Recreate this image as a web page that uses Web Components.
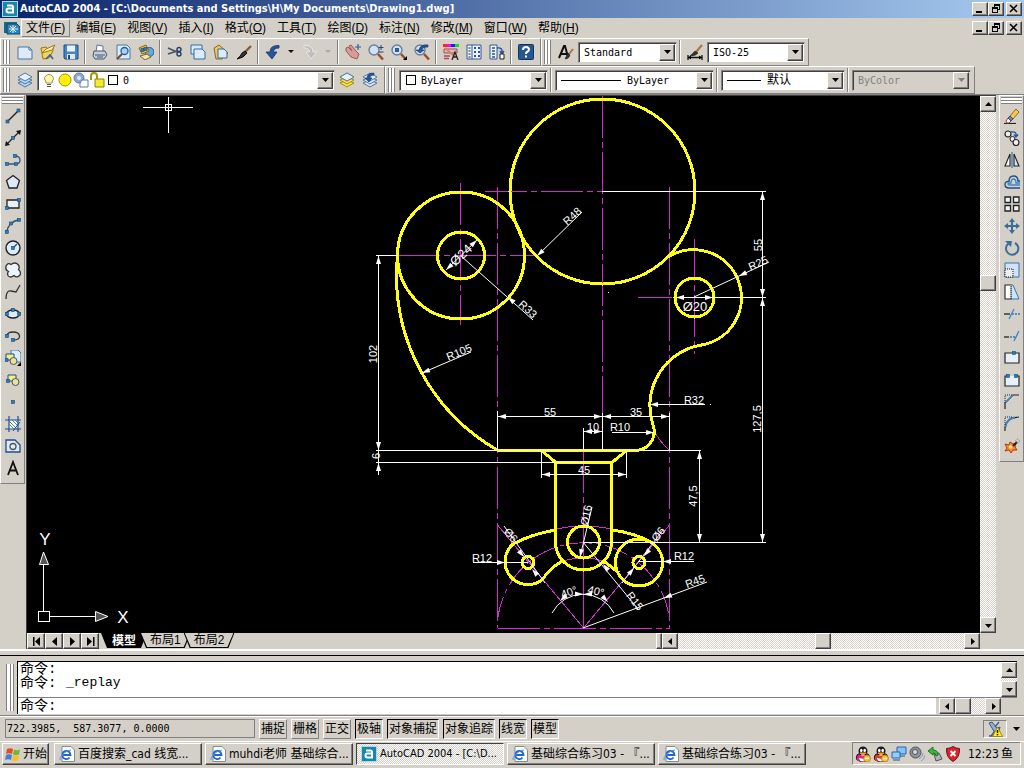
<!DOCTYPE html>
<html lang="zh-CN">
<head>
<meta charset="utf-8">
<title>AutoCAD 2004</title>
<style>
    body {
        margin: 0;
        background: #d4d0c8;
        color: #000;
        font: 12px/16px "DejaVu Sans Condensed", "Noto Sans CJK SC", sans-serif;
    }
</style>
</head>
<body>
<cad-app></cad-app>

<script>
const BASE = /* css */ `
    *, *::before, *::after { box-sizing: border-box; }
    button, select, input { font: inherit; color: inherit; margin: 0; padding: 0; border: 0; border-radius: 0; background: none; outline: none; }
    svg { display: block; }
    .raised { background: #d4d0c8; border: 1px solid; border-color: #fff #404040 #404040 #fff; box-shadow: inset -1px -1px #808080; }
    .sunken { border: 1px solid; border-color: #808080 #fff #fff #808080; }
    .track { background: repeating-conic-gradient(#fff 0 25%, #d4d0c8 0 50%) 0 0 / 2px 2px; }
`;

class CadElement extends HTMLElement {
    constructor() {
        super();
        this.attachShadow({ mode: 'open' });
    }
    connectedCallback() {
        this.shadowRoot.innerHTML = `<style>${BASE}${this.styles()}</style>${this.render()}`;
    }
    styles() { return ''; }
    render() { return '<slot></slot>'; }
}

/* ------------------------- icons ------------------------- */
const dot = (x, y) => `<rect x="${x - 1.5}" y="${y - 1.5}" width="3" height="3" fill="#2e7db8" stroke="#124a80" stroke-width=".6"/>`;
const ln = (d, c = '#222', w = 1.3) => `<path d="${d}" fill="none" stroke="${c}" stroke-width="${w}"/>`;
const sh = (d, f = '#dceafa', c = '#1d4f8c', w = 1) => `<path d="${d}" fill="${f}" stroke="${c}" stroke-width="${w}"/>`;
const lens = sh('M1 6a5 5 0 1 0 10 0a5 5 0 1 0-10 0', '#cfe2f5', '#6b7f96', 1.4) + ln('M10 10l5 5.500', '#9b4d22', 2.4);
const layers = (a = '#b9d3ee', b = '#4d7aa8') =>
    sh('M1 11l7-3l7 3l-7 4z', a, b) + sh('M1 8l7-3l7 3l-7 4z', a, b) + sh('M1 5l7-4l7 4l-7 4z', '#e7f0fa', b);
const penguin = (c) =>
    sh('M3 8c-2 2-2 4-1 6l4 1.500h4l4-1.500c1-2 1-4-1-6z', '#222', '#222') +
    '<circle cx="8" cy="5" r="4.500" fill="#181818"/><ellipse cx="6.300" cy="4.500" rx="1.300" ry="1.700" fill="#fff"/><ellipse cx="9.700" cy="4.500" rx="1.300" ry="1.700" fill="#fff"/><ellipse cx="8" cy="12" rx="4" ry="3.500" fill="#fff"/>' +
    sh('M5 7h6l-3 2z', '#f7a21b', '#f7a21b') + ln('M3 9.500c3 2 7 2 10 0', c, 3) + ln('M3 10v5', c, 2) +
    '<circle cx="12" cy="12.500" r="3.500" fill="#ffb629" stroke="#b66a00" stroke-width=".6"/>' + ln('M10 12.500h4', '#fff', 1.5);

const ICONS = {
    app: '<rect width="16" height="16" fill="#1b86ad"/><rect x=".5" y=".5" width="15" height="15" fill="none" stroke="#a7dcee"/>' + ln('M5 4.500h4.500q1.500 0 1.500 1.500v6.500M11 7.500h-4.500q-2 0-2 2t2 2h4.500', '#fff', 2),
    doc: '<rect y="2" width="13" height="11" fill="#1c668f"/>' + sh('M3 4h10l3 3v7h-13z', '#2f87b5', '#114666') + ln('M9 5v8M5 9h9M6 6l6 6M12 6l-6 6', '#dff4ff', 1),
    newfile: sh('M1 3h11l3 3v9h-14z', '#dceafa', '#4779ad') + ln('M12 3v3h3', '#4779ad', 1),
    open: sh('M1 4l5-1l2 2l5-2v4l-4 7l-6 1z', '#f2d35b', '#9a7619') + sh('M2 9l4-4l9-4l-3 5z', '#fff3a6', '#9a7619') + ln('M6 15l4-4l3 4', '#37628e', 1.6),
    save: sh('M1 1h14v14h-13l-1-1z', '#4b84c2', '#1d4a85') + '<rect x="4" y="1.500" width="8" height="6" fill="#e7f2ff"/><rect x="4" y="10" width="8" height="5" fill="#dfe6ee"/><rect x="5" y="11" width="2" height="4" fill="#1d4a85"/>',
    print: sh('M5 1l6 1v6h-7z', '#fff', '#57759a') + sh('M2 7h11l2 4l-3 4h-9l-2-3z', '#c5cfdf', '#44556c') + ln('M3 11h10M5 13h6', '#44556c', 1),
    preview: sh('M2 1h10l3 3v11h-13z', '#dceafa', '#4779ad') + sh('M6 7a3.500 3.500 0 1 0 7 0a3.500 3.500 0 1 0-7 0', '#a8d0f5', '#2f5d94', 1.3) + ln('M7 10l-5 5', '#7a4a2a', 2),
    publish: sh('M7 8a4.500 4.500 0 1 0 9 0a4.500 4.500 0 1 0-9 0', '#62a9dd', '#1d5a94') + sh('M1 4l7-3l3 6l-7 3z', '#f4c53a', '#8a6510') + sh('M2 12l7-2l4 3l-6 3z', '#f0e3b0', '#806020') + dot(4.5, 6) + dot(7.5, 5),
    cut: ln('M1 4l9 4M1 10l9-3', '#4a5564', 1.6) + ln('M10 10a2 2 0 1 0 4 0a2 2 0 1 0-4 0M10 5.500a2 2 0 1 0 4 0a2 2 0 1 0-4 0', '#243f6b', 1.4),
    copy: sh('M1 1h11v9h-11z', '#dceafa', '#2f6da5') + sh('M4 5h8l3 3v7h-11z', '#dceafa', '#2f6da5'),
    paste: sh('M1 4l5-3l9 8l-6 6h-6z', '#e9c46a', '#8a6a20') + sh('M5 5h6l3 3v6h-9z', '#dceafa', '#2f6da5'),
    brush: ln('M15 2l-6 6', '#8a5a35', 2.4) + sh('M9 7l2 2q-3 5-10 6q4-3 5-6z', '#333', '#111'),
    undo: sh('M14 1.500Q5 1 5 8H1l6 7l5-7H8.500Q8.500 4 14 4z', '#26559d', '#153469', .8),
    redo: sh('M2 1.500Q11 1 11 8h4l-6 7l-5-7h3.500Q7.500 4 2 4z', '#c0bfbd', '#eeeeec', .8),
    tri: '<path d="M5 6h6l-3 3z" fill="#111"/>',
    trioff: '<path d="M5 6h6l-3 3z" fill="#aaa"/>',
    pan: sh('M1 4l2-1l4 4l-3-5l2-1l5 6l3 3l-2 5l-6-2l-5-6z', '#d99a98', '#9a5a5a') + ln('M13 0v6M10 3h6', '#2f5d94', 1.2),
    zoomrt: lens + ln('M13 1v5M10.500 3.500h5M10.500 8h5', '#26466e', 1),
    zoomwin: lens + '<rect x="4" y="4" width="4" height="4" fill="#2f5d94"/><path d="M16 16h-4l4-4z"/>',
    zoomprev: lens + sh('M14 1q-8-1-9 5h-3l4 3l4-3h-2q0-3 6-3z', '#26559d', '#153469', .6),
    props: '<rect x="0" y="0" width="4" height="3" fill="#f22"/><rect x="4" y="0" width="4" height="3" fill="#f0f"/><rect x="8" y="0" width="4" height="3" fill="#12f"/><rect x="12" y="0" width="4" height="3" fill="#1d2"/>' + sh('M1 5h13v4h-13z', '#e9b9b0', '#a04858') + ln('M1 12h6M1 14.500h5', '#b8435b', 1.4) + ln('M2 4l9 8', '#c98a60', 2) + ln('M9 16l3-8l3 8M10 13h4', '#222', 1.3),
    dcenter: sh('M1 1h14v14h-14z', '#e9f2fd', '#2f5d94') + ln('M6 1v14', '#2f5d94', 1) + ln('M2.500 4h2M2.500 7h2M2.500 10h2M2.500 13h2', '#222', 1) + '<path d="M8 3h2v2h-2zm4 0h2v2h-2zM8 7h2v2h-2zm4 0h2v2h-2zM8 11h2v2h-2zm4 0h2v2h-2z" fill="#35537d"/>',
    palette: sh('M1 1h7v14h-7z', '#e9f2fd', '#2f5d94') + ln('M3 4h3M3 7h3M3 10h3M3 13h3', '#35537d', 1.5) + ln('M8 4q6-1 5 5M11 7l2 3l2-3', '#26559d', 1.4) + sh('M11 10h4v5h-4z', '#fff', '#222'),
    help: '<rect x=".5" y=".5" width="15" height="15" rx="1" fill="#24568f" stroke="#12345e"/>' + ln('M5 6q0-3 3-3t3 2.500q0 1.500-2 2.500q-1 .5-1 2', '#fff', 2) + '<rect x="7" y="11.500" width="2" height="2" fill="#fff"/>',
    tstyle: ln('M1 14l5-12h1l3 11M3 10h6', '#111', 2) + ln('M15 5l-4 5', '#a87445', 2) + sh('M10 9l2 2q-1 4-5 4z', '#333', '#111', .5),
    dimstyle: ln('M1 11v5M15 11v5M1 13.500h14', '#111', 1.3) + '<path d="M1 13.500l3-2v4zM15 13.500l-3-2v4z"/>' + ln('M15 1l-6 7', '#a87445', 2) + sh('M8 7l3 2q-2 3-8 3z', '#333', '#111', .5),
    layers: layers(),
    layermake: layers('#ffe04a', '#a58a1a') + sh('M1 5l7-4l7 4l-7 4z', '#e7f0fa', '#4d7aa8'),
    layerprev: layers('#dbe6f2') + sh('M12 1q-7 0-7 5h-2l4 4l3-4h-2q0-3 4-3z', '#26559d', '#153469', .6),
    bulb: sh('M5 11q0-2-1.500-4a4.500 4.500 0 1 1 9 0q-1.500 2-1.500 4z', '#fff7a8', '#9a9450') + ln('M6 12.500h4M6 14.500h4', '#555', 1.2),
    sun: '<circle cx="8" cy="8" r="6" fill="#fff000" stroke="#a29400"/>',
    vpfreeze: '<circle cx="6" cy="6" r="5" fill="#93abc6" stroke="#5c7da5"/><circle cx="6" cy="6" r="2" fill="#dceafa"/>' + sh('M9 8h6v7h-8v-4z', '#fff', '#5c7da5'),
    lock: ln('M2 8v-4q0-3 3-3t3 3v3', '#a49a12', 2) + sh('M6 7h9v8h-9z', '#f2ec2a', '#8c8408'),
    swatch: '<rect x="3.500" y="3.500" width="9" height="9" fill="#fff" stroke="#000"/>',
    line: ln('M2 14L14 2', '#222', 1.5) + dot(2.500, 13.500) + dot(13.500, 2.500),
    xline: ln('M2 14L14 2') + '<path d="M0 16l1-5l4 4zM16 0l-1 5l-4-4z" fill="#111"/>' + dot(8, 8),
    pline: ln('M2 12h9q4 0 4-4t-5-4', '#33567a') + dot(2, 12) + dot(11, 12) + dot(10, 4),
    polygon: sh('M8 1.500l6.500 5l-2.500 7.500h-8l-2.500-7.500z', '#dceafa', '#222', 1.3),
    rect: sh('M2 4h12v8h-12z', '#e7f0fb', '#222', 1.3) + dot(2, 12) + dot(14, 4),
    arc: ln('M1.500 14.500Q3 4 14.500 1.500', '#3a5068', 1.5) + dot(1.800, 14) + dot(6, 5.500) + dot(14, 1.800),
    circle: sh('M1 8a7 7 0 1 0 14 0a7 7 0 1 0-14 0', '#dceafa', '#222', 1.4) + ln('M8 8l4-4', '#1d4f8c', 1.3) + dot(8, 8),
    cloud: sh('M6 2.500Q10-.5 13 2.500Q15 5 13.500 7.500Q16.500 10 15 13Q12 16.500 9 13.500Q5 16.500 3 13.500Q2 11 3.500 9.500Q0 8 1 4Q3 0 6 2.500z', '#eef4fc', '#333', 1.3),
    spline: ln('M1 15q0-9 5-8t5 1t4-7', '#333', 1.3),
    ellipse: '<ellipse cx="8" cy="8" rx="6.500" ry="4" fill="#dceafa" stroke="#222" stroke-width="1.300"/>' + dot(1.800, 8) + dot(14.200, 8) + dot(8, 4),
    earc: ln('M2 8q0-4 6-4t6.500 4t-6.500 4', '#333', 1.3) + dot(2, 8) + dot(8, 12),
    insert: sh('M6 0h7l3 3v9h-10z', '#dceafa', '#3a74a8') + sh('M1 4h8v6h-8z', '#f2ee8c', '#1d4f8c') + sh('M5 11a3.500 3.500 0 1 0 7 0a3.500 3.500 0 1 0-7 0', '#e6e29a', '#555') + dot(1.500, 10) + '<path d="M16 16h-4l4-4z"/>',
    block: sh('M3 3h8v6h-8z', '#f2ee8c', '#1d4f8c') + sh('M7 10a3.500 3.500 0 1 0 7 0a3.500 3.500 0 1 0-7 0', '#e6e29a', '#555') + dot(3, 9),
    point: dot(8, 8),
    hatch: '<rect x="4" y="4" width="9" height="9" fill="#fff"/>' + ln('M4 0v16M13 0v16M0 4h16M0 13h16', '#1d4f8c', 1.2) + ln('M4 5l8 8M4 8l5 5M7 4l6 6M10 4l3 3', '#3a74a8', .9) + ln('M15 6l-7 9', '#1d4f8c', 1),
    region: sh('M1 2h9l5 5v7h-14z', '#dceafa', '#1d4f8c', 1.3) + ln('M5 8.500a3 3 0 1 0 6 0a3 3 0 1 0-6 0', '#555', 1.3),
    mtext: ln('M3 15L8 2l5 13M5 10.500h6', '#111', 1.8),
    erase: ln('M0 15.500h12', '#222', 1.2) + sh('M6 8l6-7l3 3l-6 7z', '#f6c94a', '#8a6a20') + sh('M4 10l2-2l3 3l-2 2z', '#5f86b8', '#2f5080') + sh('M4 10l3 3l-2 2h-2l-1-2z', '#fff', '#8a4040'),
    copyobj: sh('M1 4a3 3 0 1 0 6 0a3 3 0 1 0-6 0', '#eee', '#222', 1.2) + sh('M6 9a2.500 2.500 0 1 0 5 0a2.500 2.500 0 1 0-5 0', '#eee', '#222', 1) + sh('M9 12.500a3 3 0 1 0 6 0a3 3 0 1 0-6 0', '#eee', '#222', 1.2) + ln('M7 2q6-1 5 4M10 4.500l2 2.500l2-2.500', '#26559d', 1.4),
    mirror: sh('M6 2v12h-5z', '#fff', '#222', 1.1) + sh('M10 2v12h5z', '#cfe2f8', '#222', 1.1) + ln('M8 0v16', '#3a74a8', 1.2),
    offset: ln('M16 14h-11q-4 0-4-3.500t4-3q0-5.500 4.500-5.500t4.500 5h2', '#1d4f8c', 1.4) + ln('M16 11h-10q-2 0-2-1t3-1q0-4 2.500-4t2.500 4h4', '#3a84c8', 1.3),
    array: ['1 1', '9.500 1', '1 9.500', '9.500 9.500'].map(p => sh(`M${p}h5.500v5.500h-5.500z`, '#eef4fc', '#222', 1.3)).join(''),
    move: ln('M8 2v12M2 8h12', '#3d6c9c', 2) + '<path d="M8 0l3 4h-6zM8 16l3-4h-6zM0 8l4-3v6zM16 8l-4-3v6z" fill="#3d6c9c"/>',
    rotate: ln('M4.500 3.500A6.200 6.200 0 1 0 11 3', '#3d6c9c', 2) + '<path d="M1 1h7l-1 6z" fill="#3d6c9c"/>',
    scale: sh('M1 1h14v14h-14z', '#cfe2f8', '#3a74a8') + '<path d="M1 7h8v8h-8z" fill="#eee" stroke="#111" stroke-dasharray="1 1"/>',
    stretch: sh('M7 1h2l6 14h-8z', '#cfe2f8', '#3a74a8') + sh('M1 1h6v14h-6z', '#fff', '#222', 1.1) + '<path d="M7 1v14" stroke="#fff" stroke-dasharray="1 1"/>',
    trim: ln('M0 8h6', '#222', 1.3) + '<path d="M8 8h8" stroke="#3a74a8" stroke-width="1.300" stroke-dasharray="2 1"/>' + ln('M10 3l-5 10', '#3a84c8', 1.3),
    extend: ln('M0 9h5', '#222', 1.3) + '<path d="M6 9h5" stroke="#3a74a8" stroke-width="1.300" stroke-dasharray="2 1"/>' + ln('M15 3l-5 10', '#3a84c8', 1.3),
    breakpt: sh('M1 3h14v10h-14z', '#e7f0fb', '#222', 1.2) + dot(10, 3),
    breakit: sh('M4 4h-3v10h14v-10h-3', '#e7f0fb', '#222', 1.2) + dot(4, 4) + dot(12, 4),
    chamfer: ln('M1 15V9L9 1h6', '#222', 1.2) + ln('M1 9L9 1', '#3a84c8', 1.4) + '<path d="M1 9V1h8" fill="none" stroke="#222" stroke-dasharray="1 1"/>',
    fillet: ln('M1 15q-1-13 14-14', '#222', 1.2) + ln('M1.500 11Q3 2 11 1.500', '#3a84c8', 2) + '<path d="M1 9V1h8" fill="none" stroke="#222" stroke-dasharray="1 1"/>',
    explode: sh('M1 6l4 1l1-3l3 2l3-1l-1 4l2 3l-4 0l-2 3l-2-3l-4 1l2-3z', '#f4912a', '#b8331a') + '<circle cx="6.500" cy="9" r="1.800" fill="#ffe58a"/>' + ln('M9 8l4-4', '#222', 2) + '<circle cx="13.500" cy="3" r="2" fill="none" stroke="#888" stroke-dasharray="1 1"/>',
    ie: sh('M3 .5h9l3.500 3.500v11.500h-12.500z', '#fff', '#7f8b9b') + ln('M10.500 11.500q-1.500 2-4 1.500q-3.500-1-3-4.500t4-3.500t4 4h-7', '#1f66c8', 1.8) + ln('M1 14q-1-2 3-6t8-4', '#4b9be8', 1),
    win: '<path d="M2 3q3-1.500 6 0l-1 5q-3-1.500-6 0z" fill="#e8491d"/><path d="M9 3.500q3 1.500 6 0l-1 5q-3 1.500-6 0z" fill="#74b62e"/><path d="M1 9q3-1.500 6 0l-1 5q-3-1.500-6 0z" fill="#3b7fe0"/><path d="M8 9.500q3 1.500 6 0l-1 5q-3 1.500-6 0z" fill="#f7c01f"/>',
    qq1: penguin('#e3208c'),
    qq2: penguin('#e03a1c'),
    net: sh('M6 1h9v7h-9z', '#7fc4ff', '#2f62a8') + ln('M8 10h6', '#5f7da8', 1.5) + sh('M1 6h8v6h-8z', '#8fd0ff', '#2f62a8') + ln('M2 14h7', '#5f7da8', 1.5),
    volume: '<circle cx="6.500" cy="6.500" r="5.500" fill="#8d939b" stroke="#4e535a"/><circle cx="6" cy="6" r="2.500" fill="#d8dde3" stroke="#555"/>' + ln('M10 13q4-2 4-6M12 15q4-2 4-6', '#7f9ad0', 1),
    usb: sh('M7 8l5-1l3 6l-6 2z', '#aeb4bc', '#555') + sh('M1 5l5-4v3q5 0 5 5l-2 1q0-3-3-3v2z', '#3fb53f', '#1c741c'),
    shield: sh('M8 .5q3 2 6.500 2q.5 9-6.500 13q-7-4-6.500-13q3.500 0 6.500-2z', '#d9232e', '#7b0d14') + ln('M5.500 5l5 5M10.500 5l-5 5', '#fff', 2),
    satellite: sh('M2 2l3-1l5 6l3-1l-1 4l-4 2z', '#93aed0', '#3b5a86') + ln('M8 6l4-5M4 15l4-5M2 15h8', '#3b5a86', 1.3) + sh('M10.500 6l5 9.500h-10z', '#ffe92e', '#a18a00') + ln('M10.500 9v3M10.500 13v1.300', '#000', 1.4),
};

class CadIcon extends CadElement {
    styles() {
        return `:host { display: block; flex: none; width: 16px; height: 16px; }`;
    }
    render() {
        return `<svg width="16" height="16" viewBox="0 0 16 16" aria-hidden="true">${ICONS[this.getAttribute('name')] || ''}</svg>`;
    }
}

/* ------------------------- toolbars ------------------------- */
class CadToolbar extends CadElement {
    styles() {
        return /* css */ `
            :host { display: flex; align-items: center; height: 28px; padding: 0 3px 0 2px; border: 1px solid; border-color: #fff #808080 #808080 #fff; }
            :host([vertical]) { flex-direction: column; width: 25px; height: auto; padding: 1px 0 4px; }
            .grip { flex: none; align-self: stretch; width: 7px; margin: 1px 3px 1px 0; border: solid #808080; border-width: 0 1px; background: linear-gradient(90deg, #fff 2px, #808080 2px 3px, #fff 3px 5px, #d4d0c8 5px); }
            :host([vertical]) .grip { width: auto; height: 7px; margin: 0 1px 1px; border-width: 1px 0; background: linear-gradient(#fff 2px, #808080 2px 3px, #fff 3px 5px, #d4d0c8 5px); }
        `;
    }
    render() { return '<div class="grip"></div><slot></slot>'; }
}

class CadTool extends CadElement {
    styles() {
        return /* css */ `
            :host { display: block; flex: none; width: 23px; height: 22px; }
            :host([narrow]) { width: 14px; }
            :host([inrail]) { width: 22px; }
            button { display: flex; align-items: center; justify-content: center; width: 100%; height: 100%; }
        `;
    }
    render() {
        const icon = this.getAttribute('icon');
        return `<button type="button" aria-label="${icon}"><cad-icon name="${icon}"></cad-icon></button>`;
    }
}

class CadSep extends CadElement {
    styles() {
        return `:host { flex: none; width: 2px; height: 24px; margin: 0 2px; border-left: 1px solid #808080; border-right: 1px solid #fff; }`;
    }
    render() { return ''; }
}

class CadCombo extends CadElement {
    styles() {
        return /* css */ `
            :host { display: block; flex: none; width: var(--w); min-width: 0; margin: 0 0 0 1px; }
            .box { display: grid; grid-template-columns: auto 1fr; align-items: center; height: 21px; padding: 1px; background: #fff; border: 1px solid; border-color: #808080 #d4d0c8 #d4d0c8 #808080; box-shadow: inset 1px 1px #404040; }
            .icons { display: flex; align-items: center; padding-left: 2px; }
            select { grid-area: 1 / 2; appearance: none; width: 100%; height: 17px; padding: 0 18px 0 2px; font: var(--fs, 10px)/17px "DejaVu Sans Mono", "Noto Sans CJK SC", monospace; }
            .arrow { grid-area: 1 / 2; justify-self: end; display: grid; place-items: center; width: 16px; height: 17px; pointer-events: none; }
            :host([disabled]) .box { background: #d4d0c8; }
            :host([disabled]) select { color: #808080; opacity: 1; }
            :host([disabled]) path { fill: #808080; }
        `;
    }
    render() {
        const off = this.hasAttribute('disabled') ? 'disabled' : '';
        return /* html */ `
            <div class="box">
                <span class="icons"><slot></slot></span>
                <select aria-label="${this.getAttribute('label')}" ${off}><option>${this.getAttribute('value')}</option></select>
                <span class="arrow raised"><svg width="7" height="4"><path d="M0 0h7l-3.500 4z"/></svg></span>
            </div>`;
    }
}

/* ------------------------- window parts ------------------------- */
class WinButtons extends CadElement {
    styles() {
        return /* css */ `
            :host { display: flex; margin-left: auto; padding-right: 2px; }
            button { display: grid; place-items: center; width: 16px; height: 14px; }
            button:last-child { margin-left: 2px; }
        `;
    }
    render() {
        const glyphs = {
            '最小化': '<path d="M1 7h6v2h-6z"/>',
            '还原': '<path d="M3 0h6v6h-2v-1h1v-3h-4v1h-1zM1 3h6v6h-6zM2 5v3h4v-3z" fill-rule="evenodd"/>',
            '关闭': '<path d="M1 1l7 7M8 1l-7 7" stroke="#000" stroke-width="1.600"/>',
        };
        return Object.entries(glyphs).map(([k, g]) =>
            `<button type="button" class="raised" aria-label="${k}"><svg width="10" height="10">${g}</svg></button>`).join('');
    }
}

class CadTitle extends CadElement {
    styles() {
        return /* css */ `
            :host { display: flex; align-items: center; gap: 2px; height: 18px; padding-left: 2px; background: linear-gradient(90deg, #0a246a, #a6caf0); color: #fff; }
            h1 { margin: 0; font: bold 11px/18px "DejaVu Sans Condensed", sans-serif; white-space: nowrap; }
        `;
    }
    render() { return '<cad-icon name="app"></cad-icon><h1><slot></slot></h1><win-buttons></win-buttons>'; }
}

class CadMenu extends CadElement {
    styles() {
        return /* css */ `
            :host { display: flex; align-items: center; height: 20px; padding-left: 4px; }
            nav { display: flex; gap: 1px; padding-left: 1px; }
            button { height: 18px; padding: 0 4px; border: 1px solid transparent; font: 12px/16px "Liberation Sans", "Noto Sans CJK SC", sans-serif; white-space: nowrap; }
            button:first-child { border-color: #fff #808080 #808080 #fff; }
            u { text-underline-offset: 1px; }
        `;
    }
    render() {
        const items = ['文件F', '编辑E', '视图V', '插入I', '格式O', '工具T', '绘图D', '标注N', '修改M', '窗口W', '帮助H'];
        return `<cad-icon name="doc"></cad-icon><nav>${items.map(t =>
            `<button type="button">${t.slice(0, 2)}(<u>${t[2]}</u>)</button>`).join('')}</nav><win-buttons></win-buttons>`;
    }
}

class CadScroll extends CadElement {
    styles() {
        return /* css */ `
            :host { display: flex; min-width: 0; min-height: 0; }
            :host([vertical]) { flex-direction: column; }
            button { flex: none; display: grid; place-items: center; width: 16px; height: 16px; }
            .before { flex: var(--before, 0) 0 0; }
            .after { flex: var(--after, 1) 0 0; }
        `;
    }
    render() {
        const v = this.hasAttribute('vertical');
        const tri = (d) => `<svg width="7" height="7"><path d="${d}"/></svg>`;
        const thumb = this.hasAttribute('nothumb') ? '' : '<button type="button" class="raised" aria-label="滑块"></button>';
        return `<button type="button" class="raised" aria-label="向前">${tri(v ? 'M0 5h7l-3.500-4z' : 'M5 0v7l-4-3.500z')}</button>
            <span class="before track"></span>${thumb}<span class="after track"></span>
            <button type="button" class="raised" aria-label="向后">${tri(v ? 'M0 2h7l-3.500 4z' : 'M2 0v7l4-3.500z')}</button>`;
    }
}

/* ------------------------- drawing ------------------------- */
class CadDrawing extends CadElement {
    styles() {
        return /* css */ `
            :host { display: block; min-width: 0; min-height: 0; background: #000; overflow: hidden; }
            svg { width: 100%; height: 100%; }
            .part { fill: none; stroke: #ffff14; stroke-width: 3; shape-rendering: crispEdges; }
            .axis { fill: none; stroke: #d02cd0; stroke-dasharray: 42 4 6 4; shape-rendering: crispEdges; }
            .solid { stroke-dasharray: none; }
            .dim { fill: none; stroke: #fff; }
            .head { stroke: none; fill: #fff; }
            .ortho { shape-rendering: crispEdges; }
            text { fill: #fff; font: 11px "Liberation Sans", sans-serif; text-anchor: middle; dominant-baseline: central; }
            .big { font-size: 13px; }
            .ucs { font-size: 17px; }
        `;
    }
    // [texto, x, y, giro, clase]
    labels() {
        return [
            ['102', 373, 354, -90], ['6', 376, 456, -90], ['55', 550, 412, 0], ['35', 636, 412, 0],
            ['10', 593, 427, 0], ['R10', 620, 427, 0], ['R32', 694, 400, 0], ['45', 584, 470, 0],
            ['47,5', 693, 496, -90], ['127,5', 757, 419, -90], ['55', 758, 245, -90],
            ['R48', 572, 216, -43], ['Ø24', 461, 255, -43, 'big'], ['R33', 528, 309, 42],
            ['R105', 459, 352, -22], ['R25', 758, 263, -24], ['Ø20', 695, 306, 0, 'big'],
            ['Ø16', 586, 515, -78], ['Ø6', 511, 535, 50], ['Ø6', 658, 534, -52],
            ['R12', 482, 558, 0], ['R12', 684, 556, 0], ['R45', 695, 581, -20], ['R15', 635, 601, 52],
            ['40°', 569, 592, -20], ['40°', 596, 591, 14],
            ['X', 123, 617, 0, 'ucs'], ['Y', 45, 539, 0, 'ucs'],
        ];
    }
    // tip x, tip y, direction in degrees
    heads() {
        return [
            [378.5, 256, -90], [378.5, 450, 90], [378.5, 463, -90], [498, 416.5, 180], [602, 416.5, 0],
            [603, 416.5, 180], [669, 416.5, 0], [584, 431.5, 180], [602, 431.5, 0], [654, 432.5, 0],
            [650, 404.5, 180], [542, 474.5, 180], [626, 474.5, 0], [699.5, 451, -90], [699.5, 542, 90],
            [762.5, 192, -90], [762.5, 297, 90], [762.5, 298, -90], [762.5, 542, 90],
            [537, 256, 137], [446, 270, 137], [477, 240, -43], [508, 297, -138], [422, 373, 158],
            [739, 276, 155], [676, 297.5, 180], [713, 297.5, 0], [580, 557, 102], [524, 557, 50],
            [532, 569, -130], [644, 556, 130], [634, 568, -50], [505, 562.5, 0], [663, 561.5, 180],
            [664, 598, 159], [603, 564, -130], [560, 601, 138], [583, 594, 0], [584, 594, 180], [608, 602, 46],
        ];
    }
    render() {
        return /* html */ `
        <svg viewBox="27 96 953 537" preserveAspectRatio="xMidYMid meet" role="img" aria-label="Drawing1.dwg">
            <g class="axis">
                <path d="M602.5 96V416M485 191.5H602M497.500 187V628M669.500 187V628M460.500 183V325M398 255.500H537"/>
                <path d="M694.500 239V354M638 297.500H672M583.500 451V524M498 628.500H670"/>
                <path class="solid" d="M583.500 524V628M654 430Q659 441 669 450M497.500 525L583.500 628L669.500 525"/>
                <path d="M497.500 620A86.500 86.500 0 0 1 669.500 620" stroke-dasharray="24 4 5 4"/>
                <path class="solid" d="M556 529Q583 523 612 529M563 561Q583 555 604 561"/>
            </g>
            <g class="part">
                <circle cx="602.500" cy="191.500" r="92.500"/>
                <circle cx="461" cy="255.500" r="63.500"/>
                <circle cx="461" cy="255.500" r="23.500"/>
                <circle cx="694.500" cy="297.500" r="19.500"/>
                <path d="M397 262A202 202 0 0 0 498 450.500H636A19 19 0 0 0 653 425A61.500 61.500 0 0 1 701.500 345A48 48 0 1 0 668 257"/>
                <path d="M542 451L556 462.500H612L626 451M555.500 462V542A28 28 0 0 0 611.500 542V462"/>
                <circle cx="583.500" cy="542" r="16"/>
                <path d="M555.500 530Q532 534 513 544Q505 551 505 563A23 23 0 0 0 543 579Q548 570 562 561"/>
                <path d="M612 530Q635 533 653 543M605 562L619 573"/>
                <circle cx="639" cy="562.500" r="23.500"/>
                <circle cx="528" cy="562.500" r="6"/>
                <circle cx="639" cy="562.500" r="6"/>
            </g>
            <path d="M498 450.500H640M556 462.500H584" stroke="#fbf79a"/>
            <g class="dim ortho">
                <path d="M376 255.500H398M378.500 256V475M376 450.500H498M376 462.500H556"/>
                <path d="M602 191.500H766M762.500 191V542M714 297.500H766M676 297.500H714M584 542.500H766"/>
                <path d="M640 450.500H701M699.500 450V542M498 416.500H669M497.500 411V450M602.500 413V450M669.500 413V450"/>
                <path d="M583.500 428V450M584 431.500H602M612 432.500H654M649 404.500H705M710 404.500h1"/>
                <path d="M541.500 451V478M626.500 451V478M542 474.500H626M473 562.500H528M639 561.500H694M608 292.500h1"/>
            </g>
            <g class="dim">
                <path d="M537 256L582 212M446 270L477 240M461 256L533 320M422 373L471 352M694 297L769 262"/>
                <path d="M580 557L592 507M504 526L545 583M622 583L663 530M583 628L707 582M583 542L638 609"/>
                <path d="M552 613A35 35 0 0 1 614 613"/>
            </g>
            ${this.heads().map(([x, y, a]) => `<path class="head" d="M0 0L-8 2.500V-2.500z" transform="translate(${x} ${y}) rotate(${a})"/>`).join('')}
            ${this.labels().map(([t, x, y, a, c]) => `<text class="${c || ''}" transform="translate(${x} ${y}) rotate(${a})">${t}</text>`).join('')}
            <g class="dim ortho">
                <path d="M143 107.500H193M168.500 97V133M165.500 104.500h6v6h-6z"/>
                <path d="M38.500 611.500h11v10h-11zM43.500 611V564M50 616.500H95"/>
            </g>
            <g class="dim">
                <path d="M39.500 564.500L43.500 552L48.500 564.500zM95.500 611.500L108 616.500L95.500 621.500z" fill="#555"/>
            </g>
        </svg>`;
    }
}

class CadTabs extends CadElement {
    styles() {
        return /* css */ `
            :host { display: flex; height: 16px; }
            .nav { flex: none; display: grid; place-items: center; width: 18px; height: 16px; }
            .tabs { display: flex; padding-left: 2px; }
            .tab { display: block; height: 15px; margin-right: -7px; font: 12px/14px "Liberation Sans", "Noto Sans CJK SC", sans-serif; background: #000; clip-path: polygon(0 0, 100% 0, calc(100% - 6px) 100%, 6px 100%); }
            .tab.on { padding: 0 11px; color: #fff; font-weight: bold; }
            .tab.off { padding: 0 1px 1px; }
            .tab.off span { display: block; padding: 0 9px; background: #d4d0c8; clip-path: polygon(0 0, 100% 0, calc(100% - 6px) 100%, 6px 100%); }
            .split { flex: none; width: 6px; margin-left: auto; }
            cad-scroll { flex: 0 1 318px; --before: 137; --after: 133; }
        `;
    }
    render() {
        const nav = {
            '第一个': 'M1 0h1.500v9h-1.500zM8 0v9l-5-4.500z', '上一个': 'M7 0v9l-5-4.500z',
            '下一个': 'M2 0v9l5-4.500z', '最后一个': 'M1 0v9l5-4.500zM7 0h1.500v9h-1.500z',
        };
        return `${Object.entries(nav).map(([k, d]) => `<button type="button" class="nav raised" aria-label="${k}"><svg width="9" height="9"><path d="${d}"/></svg></button>`).join('')}
            <div class="tabs">
                <button type="button" class="tab on">模型</button>
                <button type="button" class="tab off"><span>布局1</span></button>
                <button type="button" class="tab off"><span>布局2</span></button>
            </div>
            <span class="split raised"></span><cad-scroll></cad-scroll>`;
    }
}

class CadWorkspace extends CadElement {
    styles() {
        return /* css */ `
            :host { display: flex; align-items: flex-start; flex: 1; min-height: 0; border-top: 1px solid #808080; }
            .view { align-self: stretch; flex: 1; display: grid; grid-template: 1fr 16px / 1fr 16px; min-width: 0; margin: 0 3px 0 1px; border-left: 1px solid #404040; border-top: 1px solid #404040; }
            cad-scroll { --before: 163; --after: 326; }
        `;
    }
    render() {
        const left = 'line xline pline polygon rect arc circle cloud spline ellipse earc insert block point hatch region mtext'.split(' ');
        const right = 'erase copyobj mirror offset array move rotate scale stretch trim extend breakpt breakit chamfer fillet explode'.split(' ');
        const tools = (list) => list.map(i => `<cad-tool inrail icon="${i}"></cad-tool>`).join('');
        return /* html */ `
            <cad-toolbar vertical>${tools(left)}</cad-toolbar>
            <div class="view">
                <cad-drawing></cad-drawing>
                <cad-scroll vertical></cad-scroll>
                <cad-tabs></cad-tabs>
            </div>
            <cad-toolbar vertical>${tools(right)}</cad-toolbar>`;
    }
}

/* ------------------------- bottom ------------------------- */
class CadCommand extends CadElement {
    styles() {
        return /* css */ `
            :host { display: flex; gap: 3px; padding: 10px 7px 1px 6px; border-top: 2px solid #fff; background: linear-gradient(#d4d0c8 4px, #000 4px 5px, #d4d0c8 5px); font: 13px/14px "Liberation Mono", "Noto Sans CJK SC", monospace; }
            .grip { flex: none; width: 8px; margin: 3px 0; border: solid #808080; border-width: 0 1px; background: linear-gradient(90deg, #fff 3px, #808080 3px 4px, #fff 4px 6px, #d4d0c8 6px); }
            .pane { flex: 1; min-width: 0; border-left: 1px solid #000; border-top: 1px solid #000; }
            .log { display: flex; height: 35px; background: #fff; }
            .text { flex: 1; padding-left: 2px; }
            p { display: flex; margin: 0; }
            .prompt { flex: none; min-width: 46px; font-size: 14px; }
            .entry { display: flex; height: 17px; border-top: 1px solid #808080; background: #d4d0c8; }
            label { padding-left: 2px; background: #fff; line-height: 16px; }
            input { flex: 1; min-width: 0; background: #fff; }
            .entry cad-scroll { width: 62px; margin: 0 16px 0 3px; --before: 0; --after: 1; }
        `;
    }
    render() {
        return /* html */ `
            <div class="grip"></div>
            <div class="pane">
                <div class="log">
                    <div class="text">
                        <p><span class="prompt">命令:</span></p>
                        <p><span class="prompt">命令:</span>_replay</p>
                    </div>
                    <cad-scroll vertical nothumb></cad-scroll>
                </div>
                <div class="entry"><label class="prompt" for="cmd">命令:</label><input id="cmd" type="text"><cad-scroll></cad-scroll></div>
            </div>`;
    }
}

class CadStatus extends CadElement {
    styles() {
        return /* css */ `
            :host { display: flex; align-items: center; gap: 4px; height: 26px; padding: 0 4px 0 5px; border-top: 1px solid #808080; box-shadow: inset 0 1px #fff; }
            output { flex: 0 1 250px; height: 19px; padding-left: 1px; border: 1px solid #808080; font: 10px/17px "DejaVu Sans Mono", monospace; white-space: pre; }
            button { flex: none; height: 20px; padding: 0 1px; border: 1px solid; border-color: #fff #808080 #808080 #fff; line-height: 18px; }
            button[aria-pressed=true] { border-color: #000 #fff #fff #000; }
            .tray { display: flex; align-items: center; gap: 6px; margin-left: auto; }
            .tray span { padding: 0 3px; }
        `;
    }
    render() {
        const modes = [['捕捉', 0], ['栅格', 0], ['正交', 0], ['极轴', 1], ['对象捕捉', 1], ['对象追踪', 1], ['线宽', 1], ['模型', 1]];
        return `<output>722.3985,  587.3077, 0.0000</output>
            ${modes.map(([t, on]) => `<button type="button" aria-pressed="${!!on}">${t}</button>`).join('')}
            <div class="tray"><span class="sunken"><cad-icon name="satellite"></cad-icon></span><svg width="7" height="4"><path d="M0 0h7l-3.500 4z"/></svg></div>`;
    }
}

class CadTaskbar extends CadElement {
    styles() {
        return /* css */ `
            :host { display: flex; align-items: center; gap: 3px; height: 27px; padding: 0 3px 3px 2px; border-top: 1px solid #fff; }
            button { display: flex; align-items: center; gap: 3px; height: 22px; padding: 0 3px; white-space: nowrap; overflow: hidden; }
            .start { flex: none; width: 47px; gap: 2px; padding: 0 2px; margin-right: 2px; }
            .task { flex: 0 1 148px; padding: 0 4px; }
            .task[aria-pressed=true] { border: 1px solid; border-color: #404040 #fff #fff #404040; font-size: 11px; }
            .tray { display: flex; align-items: center; gap: 2px; height: 23px; margin-left: auto; padding: 0 7px 0 2px; }
            time { padding-left: 5px; }
        `;
    }
    render() {
        const tasks = [['ie', '百度搜索_cad 线宽...'], ['ie', 'muhdi老师 基础综合...'], ['app', 'AutoCAD 2004 - [C:\\D...'], ['ie', '基础综合练习03 - 『...'], ['ie', '基础综合练习03 - 『...']];
        return `<button type="button" class="start raised"><cad-icon name="win"></cad-icon>开始</button>
            ${tasks.map(([i, t]) => `<button type="button" class="task ${i === 'app' ? 'track' : 'raised'}" aria-pressed="${i === 'app'}"><cad-icon name="${i}"></cad-icon>${t}</button>`).join('')}
            <div class="tray sunken">
                ${['qq1', 'qq2', 'net', 'volume', 'usb', 'shield'].map(i => `<cad-icon name="${i}"></cad-icon>`).join('')}
                <time>12:23</time>鱼
            </div>`;
    }
}

class CadApp extends CadElement {
    styles() {
        return /* css */ `
            :host { display: flex; flex-direction: column; height: 100vh; min-height: 600px; overflow: hidden; }
            .row { display: flex; height: 28px; }
            .w99 { --w: 99px; } .w98 { --w: 98px; } .w298 { --w: 298px; } .w149 { --w: 149px; }
            .w159 { --w: 159px; } .w124 { --w: 124px; --fs: 12px; } .w119 { --w: 119px; }
            .stroke { display: block; height: 1px; background: #000; margin: 0 4px 0 2px; }
            .long { width: 60px; } .short { width: 34px; }
        `;
    }
    render() {
        const tools = (list) => list.split(' ').map(i => i === '|' ? '<cad-sep></cad-sep>' : `<cad-tool icon="${i}" ${i.startsWith('tri') ? 'narrow' : ''}></cad-tool>`).join('');
        const icons = (list) => list.split(' ').map(i => `<cad-icon name="${i}"></cad-icon>`).join('');
        return /* html */ `
            <cad-title>AutoCAD 2004 - [C:\\Documents and Settings\\H\\My Documents\\Drawing1.dwg]</cad-title>
            <cad-menu></cad-menu>
            <div class="row">
                <cad-toolbar>${tools('newfile open save | print preview publish | cut copy paste brush | undo tri redo trioff | pan zoomrt zoomwin zoomprev | props dcenter palette | help')}</cad-toolbar>
                <cad-toolbar>${tools('tstyle')}<cad-combo class="w99" label="文字样式" value="Standard"></cad-combo>
                    <cad-sep></cad-sep>${tools('dimstyle')}<cad-combo class="w98" label="标注样式" value="ISO-25"></cad-combo></cad-toolbar>
            </div>
            <div class="row">
                <cad-toolbar>${tools('layers')}<cad-combo class="w298" label="图层" value="0">${icons('bulb sun vpfreeze lock swatch')}</cad-combo>${tools('layermake layerprev')}</cad-toolbar>
                <cad-toolbar><cad-combo class="w149" label="颜色" value="ByLayer">${icons('swatch')}</cad-combo><cad-sep></cad-sep>
                    <cad-combo class="w159" label="线型" value="ByLayer"><span class="stroke long"></span></cad-combo><cad-sep></cad-sep>
                    <cad-combo class="w124" label="线宽" value="默认"><span class="stroke short"></span></cad-combo><cad-sep></cad-sep>
                    <cad-combo class="w119" label="打印样式" value="ByColor" disabled></cad-combo></cad-toolbar>
            </div>
            <cad-workspace></cad-workspace>
            <cad-command></cad-command>
            <cad-status></cad-status>
            <cad-taskbar></cad-taskbar>`;
    }
}

customElements.define('cad-icon', CadIcon);
customElements.define('cad-toolbar', CadToolbar);
customElements.define('cad-tool', CadTool);
customElements.define('cad-sep', CadSep);
customElements.define('cad-combo', CadCombo);
customElements.define('win-buttons', WinButtons);
customElements.define('cad-title', CadTitle);
customElements.define('cad-menu', CadMenu);
customElements.define('cad-scroll', CadScroll);
customElements.define('cad-drawing', CadDrawing);
customElements.define('cad-tabs', CadTabs);
customElements.define('cad-workspace', CadWorkspace);
customElements.define('cad-command', CadCommand);
customElements.define('cad-status', CadStatus);
customElements.define('cad-taskbar', CadTaskbar);
customElements.define('cad-app', CadApp);
</script>
</body>
</html>
